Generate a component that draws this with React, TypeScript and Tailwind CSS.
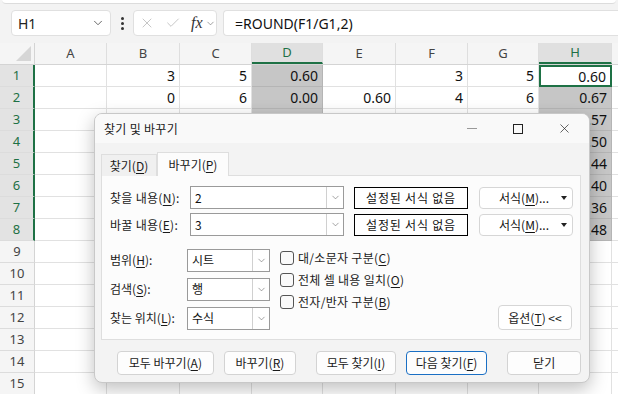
import { ChevronDown, X, Check } from "lucide-react";

const colWidths = [72, 73, 72, 71, 73, 72, 71, 73];
const colNames = ["A", "B", "C", "D", "E", "F", "G", "H"];

const data: Record<number, string[]> = {
  1: ["", "3", "5", "0.60", "", "3", "5", "0.60"],
  2: ["", "0", "6", "0.00", "0.60", "4", "6", "0.67"],
  3: ["", "", "", "", "", "", "", "0.57"],
  4: ["", "", "", "", "", "", "", "0.50"],
  5: ["", "", "", "", "", "", "", "0.44"],
  6: ["", "", "", "", "", "", "", "0.40"],
  7: ["", "", "", "", "", "", "", "0.36"],
  8: ["", "", "", "", "", "", "", "0.48"],
};

const rows = Array.from({ length: 15 }, (_, i) => i + 1);

function Mn({ children }: { children: string }) {
  return <u className="underline-offset-2">{children}</u>;
}

function Toolbar() {
  return (
    <div className="h-[43px] bg-[#f3f3f3] flex flex-col">
      <div className="h-[4px] bg-white border-b border-[#dcdcdc] rounded-b-md mx-[2px]" />
      <div className="flex items-center h-[26px] mt-[6px] pl-[11px]">
        <div className="w-[100px] h-[26px] bg-white border border-[#e0e0e0] rounded-[4px] flex items-center justify-between pl-[6px] pr-[5px]">
          <span className="text-[14px] text-[#222]">H1</span>
          <ChevronDown size={14} strokeWidth={1.5} className="text-[#555]" />
        </div>
        <div className="w-[22px] flex flex-col items-center gap-[2px]">
          <span className="w-[3px] h-[3px] bg-[#333] rounded-full" />
          <span className="w-[3px] h-[3px] bg-[#333] rounded-full" />
          <span className="w-[3px] h-[3px] bg-[#333] rounded-full" />
        </div>
        <div className="w-[84px] h-[26px] bg-white border border-[#e0e0e0] rounded-[4px] flex items-center pl-[5px] gap-[4px]">
          <X size={16} strokeWidth={1.2} className="text-[#b8b8b8]" />
          <Check size={16} strokeWidth={1.2} className="text-[#b8b8b8] ml-[6px]" />
          <span className="ml-[6px] text-[16px] italic text-[#333] leading-none" style={{ fontFamily: '"Liberation Serif", serif' }}>
            fx
          </span>
          <ChevronDown size={11} strokeWidth={1.5} className="text-[#777] -ml-[2px]" />
        </div>
        <div className="flex-1 ml-[6px] h-[26px] bg-white border border-r-0 border-[#e0e0e0] rounded-l-[4px] flex items-center pl-[11px]">
          <span className="text-[14px] text-[#111]">=ROUND(F1/G1,2)</span>
        </div>
      </div>
    </div>
  );
}

function HeaderRow() {
  return (
    <div className="flex h-[22px] bg-[#f5f5f5] border-b border-[#d4d4d4]">
      <div className="w-[35px] shrink-0 border-r border-[#d4d4d4] relative">
        <div
          className="absolute right-[3px] bottom-[3px] w-[15px] h-[15px] bg-[#d6d6d6]"
          style={{ clipPath: "polygon(100% 0, 100% 100%, 0 100%)" }}
        />
      </div>
      {colNames.map((c, i) => {
        const sel = c === "D" || c === "H";
        return (
          <div
            key={c}
            style={{ width: colWidths[i] }}
            className={`shrink-0 flex items-center justify-center text-[13px] border-r border-[#dedede] ${
              sel ? "bg-[#e0e0e0] text-[#1e7145] border-b-2 border-b-[#1e7145]" : "text-[#444]"
            }`}
          >
            {c}
          </div>
        );
      })}
      <div className="flex-1" />
    </div>
  );
}

function Grid() {
  return (
    <div>
      {rows.map((r) => {
        const rowSel = r <= 8;
        const vals = data[r] ?? [];
        return (
          <div key={r} className="flex h-[22px]">
            <div
              className={`w-[35px] shrink-0 flex items-center justify-center text-[13px] border-b border-[#dcdcdc] ${
                rowSel
                  ? "bg-[#e3e3e3] text-[#1e7145] border-r-2 border-r-[#1e7145]"
                  : "bg-[#f5f5f5] text-[#444] border-r border-r-[#d4d4d4]"
              }`}
            >
              {r}
            </div>
            {colNames.map((c, i) => {
              const active = c === "H" && r === 1;
              const sel = !active && rowSel && (c === "D" || c === "H");
              return (
                <div
                  key={c}
                  style={{ width: colWidths[i] }}
                  className={`shrink-0 flex items-center justify-end pr-[4px] text-[14px] text-[#111] border-r border-b ${
                    active
                      ? "bg-white border-2 border-[#1e7145] border-r-2 border-b-2 pr-[3px]"
                      : sel
                      ? "bg-[#c6c6c6] border-[#b5b5b5]"
                      : "bg-white border-[#e1e1e1]"
                  }`}
                >
                  {vals[i] ?? ""}
                </div>
              );
            })}
            <div className="flex-1 bg-white border-b border-[#e1e1e1]" />
          </div>
        );
      })}
    </div>
  );
}

function ComboInput({ value, width }: { value: string; width: number }) {
  return (
    <div style={{ width }} className="h-[23px] bg-white border border-[#9a9a9a] flex items-stretch">
      <div className="flex-1 flex items-center pl-[4px] text-[12px] text-[#111]">{value}</div>
      <div className="w-[17px] border-l border-[#d0d0d0] flex items-center justify-center">
        <ChevronDown size={11} strokeWidth={1.3} className="text-[#666]" />
      </div>
    </div>
  );
}

function Btn({ children, width, primary }: { children: React.ReactNode; width: number; primary?: boolean }) {
  return (
    <div
      style={{ width }}
      className={`h-[24px] bg-[#fdfdfd] rounded-[4px] flex items-center justify-center text-[12px] text-[#1a1a1a] border ${
        primary ? "border-[#1a6fc4]" : "border-[#d3d3d3]"
      }`}
    >
      {children}
    </div>
  );
}

function FormatRow({ label, mn, value }: { label: string; mn: string; value: string }) {
  return (
    <div className="flex items-center h-[23px]">
      <div className="w-[80px] text-[12px] text-[#1a1a1a] tracking-[0.3px]">
        {label}(<Mn>{mn}</Mn>):
      </div>
      <ComboInput value={value} width={154} />
      <div className="ml-[10px] w-[114px] h-[22px] border border-black bg-white flex items-center justify-center text-[12px] text-[#111] tracking-[0.8px]">
        설정된 서식 없음
      </div>
      <div className="ml-[11px] w-[94px] h-[22px] bg-white border border-[#d6d6d6] rounded-[4px] flex items-center justify-end pr-[5px] text-[12px] text-[#111]">
        <span>
          서식(<Mn>M</Mn>)...
        </span>
        <span className="ml-[12px] w-0 h-0 border-l-[3px] border-r-[3px] border-t-[4px] border-l-transparent border-r-transparent border-t-[#222]" />
      </div>
    </div>
  );
}

function SelectRow({ label, mn, value }: { label: string; mn: string; value: string }) {
  return (
    <div className="flex items-center h-[24px]">
      <div className="w-[77px] text-[12px] text-[#1a1a1a]">
        {label}(<Mn>{mn}</Mn>):
      </div>
      <ComboInput value={value} width={83} />
    </div>
  );
}

function CheckRow({ label, mn }: { label: string; mn: string }) {
  return (
    <div className="flex items-center h-[22px] gap-[4px]">
      <span className="w-[14px] h-[14px] rounded-[3px] border border-[#555] bg-[#fafafa]" />
      <span className="text-[12px] text-[#1a1a1a] tracking-[0.3px]">
        {label}(<Mn>{mn}</Mn>)
      </span>
    </div>
  );
}

function FindReplaceDialog() {
  return (
    <div
      className="absolute left-[94px] top-[113px] w-[496px] h-[270px] bg-[#f3f3f3] rounded-[8px] border border-[#c8c8c8] shadow-[0_6px_18px_rgba(0,0,0,0.25)] flex flex-col overflow-hidden"
    >
      <div className="h-[29px] bg-[#f9f9f9] flex items-center pl-[9px] shrink-0">
        <span className="text-[12px] text-[#1a1a1a] tracking-[0.3px]">찾기 및 바꾸기</span>
        <div className="ml-auto flex items-center h-full pr-[2px]">
          <div className="w-[46px] flex items-center justify-center">
            <span className="w-[10px] h-px bg-[#999]" />
          </div>
          <div className="w-[46px] flex items-center justify-center">
            <span className="w-[10px] h-[10px] border border-[#222]" />
          </div>
          <div className="w-[46px] flex items-center justify-center">
            <X size={15} strokeWidth={1.1} className="text-[#222]" />
          </div>
        </div>
      </div>
      <div className="flex-1 flex flex-col pl-[6px] pr-[8px] pt-[10px]">
        <div className="flex items-end h-[23px] -mb-px relative z-10">
          <div className="w-[56px] h-[22px] border border-b-0 border-[#dedede] bg-[#f0f0f0] flex items-center justify-center text-[12px] text-[#1a1a1a]">
            찾기(<Mn>D</Mn>)
          </div>
          <div className="w-[72px] h-[24px] border border-b-0 border-[#dedede] bg-[#fcfcfc] flex items-center justify-center text-[12px] text-[#1a1a1a]">
            바꾸기(<Mn>P</Mn>)
          </div>
        </div>
        <div className="h-[165px] bg-[#fcfcfc] border border-[#dedede] pl-[8px] pt-[10px] flex flex-col">
          <FormatRow label="찾을 내용" mn="N" value="2" />
          <div className="h-[4px]" />
          <FormatRow label="바꿀 내용" mn="E" value="3" />
          <div className="flex mt-[12px]">
            <div className="flex flex-col gap-[5px]">
              <SelectRow label="범위" mn="H" value="시트" />
              <SelectRow label="검색" mn="S" value="행" />
              <SelectRow label="찾는 위치" mn="L" value="수식" />
            </div>
            <div className="ml-[10px] flex flex-col -mt-[1px]">
              <CheckRow label="대/소문자 구분" mn="C" />
              <CheckRow label="전체 셀 내용 일치" mn="O" />
              <CheckRow label="전자/반자 구분" mn="B" />
            </div>
            <div className="ml-auto mr-[8px] self-end">
              <div className="w-[74px] h-[25px] bg-white border border-[#d6d6d6] rounded-[4px] flex items-center justify-center text-[12px] text-[#1a1a1a]">
                옵션(<Mn>T</Mn>)&nbsp;&lt;&lt;
              </div>
            </div>
          </div>
        </div>
        <div className="flex items-center mt-[11px] pl-[16px]">
          <Btn width={97}>
            모두 바꾸기(<Mn>A</Mn>)
          </Btn>
          <div className="w-[10px]" />
          <Btn width={73}>
            바꾸기(<Mn>R</Mn>)
          </Btn>
          <div className="w-[20px]" />
          <Btn width={80}>
            모두 찾기(<Mn>I</Mn>)
          </Btn>
          <div className="w-[10px]" />
          <Btn width={82} primary>
            다음 찾기(<Mn>F</Mn>)
          </Btn>
          <div className="w-[20px]" />
          <Btn width={74}>닫기</Btn>
        </div>
      </div>
    </div>
  );
}

export default function App() {
  return (
    <div
      className="relative w-[618px] h-[394px] overflow-hidden bg-white"
      style={{ fontFamily: '"Noto Sans", "Noto Sans CJK KR", sans-serif' }}
    >
      <Toolbar />
      <HeaderRow />
      <Grid />
      <div style={{ fontFamily: '"Noto Sans CJK KR", "Noto Sans", sans-serif' }}>
        <FindReplaceDialog />
      </div>
    </div>
  );
}
